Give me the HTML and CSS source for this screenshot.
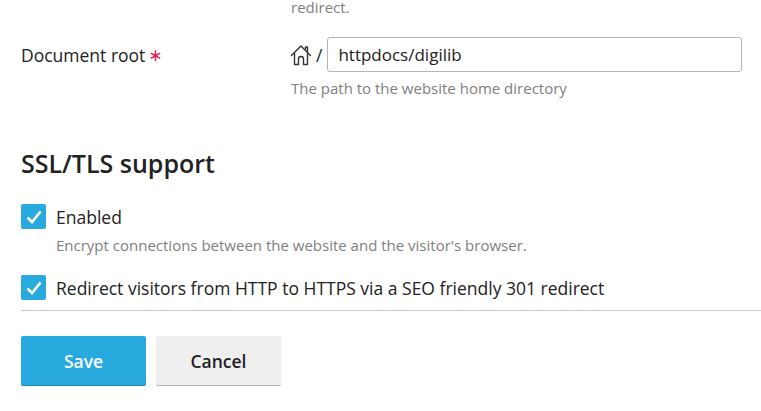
FILE: index.html
```html
<!DOCTYPE html>
<html lang="en">
<head>
  <meta charset="UTF-8" />
  <meta name="viewport" content="width=device-width, initial-scale=1.0" />
  <title>Hosting Settings</title>
  <link rel="stylesheet" href="styles.css">
</head>
<body>
  <div class="form-row">
    <div></div>
    <div class="field hint top-hint">redirect.</div>
  </div>

  <!-- Document root -->
  <div class="form-row root-row">
    <label class="row-label" for="docroot">Document root<span class="required">∗</span></label>
    <div class="field">
      <div class="path-input">
        <svg class="home-icon" width="22" height="22" viewBox="0 0 22 22" fill="none" stroke="#333" stroke-width="1.4" stroke-linejoin="round" stroke-linecap="round">
          <path d="M1.5 11.5 L11 2 L20.5 11.5" />
          <path d="M15.5 5 V3 H17.5 V8" />
          <path d="M4.5 9.5 V20.5 H8.5 V15 A2.5 2.5 0 0 1 13.5 15 V20.5 H17.5 V9.5" />
        </svg>
        <span class="slash">/</span>
        <input type="text" id="docroot" value="httpdocs/digilib" />
      </div>
      <div class="hint path-hint">The path to the website home directory</div>
    </div>
  </div>

  <h2>SSL/TLS support</h2>

  <div class="check-row">
    <span class="checkbox">
      <svg width="18" height="16" viewBox="0 0 18 16" fill="none" stroke="#fff" stroke-width="2.6"><path d="M2.5 8.5 L7 13 L15.5 2.5" /></svg>
    </span>
    <span class="check-label">Enabled</span>
  </div>
  <div class="hint check-hint">Encrypt connections between the website and the visitor's browser.</div>

  <div class="check-row second">
    <span class="checkbox">
      <svg width="18" height="16" viewBox="0 0 18 16" fill="none" stroke="#fff" stroke-width="2.6"><path d="M2.5 8.5 L7 13 L15.5 2.5" /></svg>
    </span>
    <span class="check-label">Redirect visitors from HTTP to HTTPS via a SEO friendly 301 redirect</span>
  </div>

  <div class="actions">
    <button class="btn btn-primary">Save</button>
    <button class="btn">Cancel</button>
  </div>
</body>
</html>
```

FILE: styles.css
```css
* {
  box-sizing: border-box;
}
body {
  font-family: 'Open Sans', sans-serif;
  font-size: 17.5px;
  color: #222;
  margin: 0;
  padding-left: 21px;
  background: #fff;
  overflow: hidden;
}
.form-row {
  display: grid;
  grid-template-columns: 270px 451px;
}
.root-row {
  margin-top: 23px;
}
.row-label {
  padding-top: 6px;
  line-height: 24px;
}
.required {
  font-family: 'DejaVu Sans', sans-serif;
  font-size: 17px;
  line-height: 20px;
  margin-left: 3px;
  vertical-align: 1px;
  color: #e0194e;
}
.hint {
  font-size: 15px;
  line-height: 20px;
  color: #808080;
}
.top-hint {
  line-height: 14px;
}
/* Path field */
.path-input {
  display: flex;
  align-items: center;
}
.home-icon {
  display: block;
  margin-left: -1px;
}
.slash {
  margin: 0 5px 0 4px;
  line-height: 24px;
}
.path-input input {
  width: 415px;
  height: 35px;
  padding: 0 10px;
  border: 1px solid #b5b5b5;
  border-radius: 3px;
  font: inherit;
  font-size: 17px;
  color: #222;
}
.path-hint {
  margin-top: 6px;
}
h2 {
  font-size: 25px;
  line-height: 32px;
  font-weight: 600;
  margin: 49px 0 0;
}
/* Checkboxes */
.check-row {
  display: flex;
  align-items: center;
  gap: 10px;
  margin-top: 25px;
}
.check-row.second {
  margin-top: 20px;
}
.checkbox {
  width: 25px;
  height: 25px;
  border-radius: 2px;
  background: #28aade;
  display: flex;
  align-items: center;
  justify-content: center;
}
.check-label {
  line-height: 24px;
}
.check-hint {
  margin: 6px 0 0 35px;
}
/* Buttons */
.actions {
  display: flex;
  gap: 10px;
  margin-top: 10px;
  padding-top: 25px;
  border-top: 1px solid #ccc;
}
.btn {
  width: 125px;
  height: 50px;
  border: none;
  border-bottom: 1px solid #b5b5b5;
  border-radius: 2px;
  background: #efefef;
  color: #222;
  font: inherit;
  font-weight: 600;
  cursor: pointer;
}
.btn-primary {
  background: #28aade;
  border-bottom-color: #1e86b0;
  color: #fff;
}
```
